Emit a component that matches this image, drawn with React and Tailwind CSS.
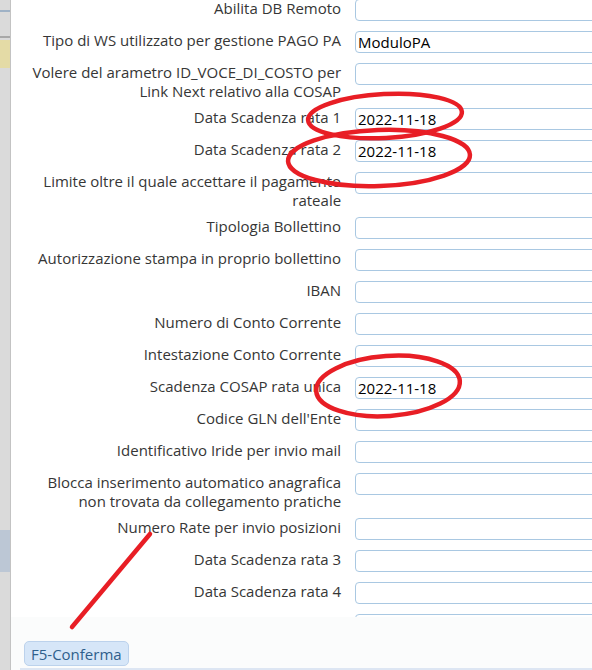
import React from "react";

const rows = [
  { label: ["Abilita DB Remoto"] },
  { label: ["Tipo di WS utilizzato per gestione PAGO PA"], value: "ModuloPA" },
  { label: ["Volere del arametro ID_VOCE_DI_COSTO per", "Link Next relativo alla COSAP"] },
  { label: ["Data Scadenza rata 1"], value: "2022-11-18" },
  { label: ["Data Scadenza rata 2"], value: "2022-11-18" },
  { label: ["Limite oltre il quale accettare il pagamento", "rateale"] },
  { label: ["Tipologia Bollettino"] },
  { label: ["Autorizzazione stampa in proprio bollettino"] },
  { label: ["IBAN"] },
  { label: ["Numero di Conto Corrente"] },
  { label: ["Intestazione Conto Corrente"] },
  { label: ["Scadenza COSAP rata unica"], value: "2022-11-18" },
  { label: ["Codice GLN dell'Ente"] },
  { label: ["Identificativo Iride per invio mail"] },
  { label: ["Blocca inserimento automatico anagrafica", "non trovata da collegamento pratiche"] },
  { label: ["Numero Rate per invio posizioni"] },
  { label: ["Data Scadenza rata 3"] },
  { label: ["Data Scadenza rata 4"] },
  { label: ["Importo minimo per invio posizioni"] },
];

function FieldRow({ label, value }) {
  const tall = label.length > 1;
  return (
    <div className={`flex items-start pt-[5px] ${tall ? "h-[45px]" : "h-[32px]"}`}>
      <div className="w-[314px] shrink-0 text-right text-[15px] leading-[19px] text-[#363636]">
        {label.map((line, i) => (
          <div key={i} className="whitespace-nowrap">
            {line}
            {"\u00a0"}
          </div>
        ))}
      </div>
      <div className="ml-[10px] w-[260px] shrink-0 h-[22px] rounded-[4px] border border-[#a9c8e2] bg-white pl-[2px] text-[15px] leading-[20px] text-black">
        {value}
      </div>
    </div>
  );
}

export default function App() {
  return (
    <div
      className="relative w-[592px] h-[670px] overflow-hidden bg-white flex"
      style={{ fontFamily: '"Open Sans", "Noto Sans", sans-serif' }}
    >
      {/* edge of the page behind the dialog */}
      <div className="w-[11px] shrink-0 flex flex-col bg-[#dadada] border-r border-[#c3c3c3]">
        <div className="h-[10px]" />
        <div className="h-[2px] bg-[#9fb2c6]" />
        <div className="h-[24px]" />
        <div className="h-[2px] bg-[#a8a8a8]" />
        <div className="h-[2px]" />
        <div className="h-[28px] bg-[#e4dba6]" />
        <div className="h-[462px]" />
        <div className="h-[42px] bg-[#bcc7d5]" />
      </div>

      <div className="flex-1 flex flex-col min-w-0">
        <div className="h-[617px] overflow-hidden pl-[20px]">
          <div className="-mt-[6px]">
            {rows.map((r, i) => (
              <FieldRow key={i} label={r.label} value={r.value} />
            ))}
          </div>
        </div>
        <div className="flex-1 bg-[#fbfcfc] flex flex-col">
          <div className="flex-1 flex items-end pl-[13px] pb-[2px]">
            <button className="h-[25px] px-[6px] rounded-[5px] border border-[#bcd2ec] bg-[#d6e6f8] text-[15px] leading-[20px] text-[#2f5f8c]">
              F5-Conferma
            </button>
          </div>
          <div className="ml-[9px] h-[2px] bg-[#dde6f3]" />
        </div>
      </div>

      {/* red hand-drawn annotations */}
      <svg
        className="absolute inset-0 pointer-events-none"
        width="592"
        height="670"
        viewBox="0 0 592 670"
      >
        <g fill="none" stroke="#e81e25" strokeWidth="4.5" strokeLinecap="round">
          <ellipse cx="385" cy="116" rx="77" ry="22" transform="rotate(-3 385 116)" />
          <ellipse cx="379" cy="158" rx="91" ry="28" transform="rotate(-2 379 158)" />
          <ellipse cx="388" cy="386" rx="72" ry="30" transform="rotate(-4 388 386)" />
          <line x1="150" y1="534" x2="72" y2="627" />
        </g>
      </svg>
    </div>
  );
}
